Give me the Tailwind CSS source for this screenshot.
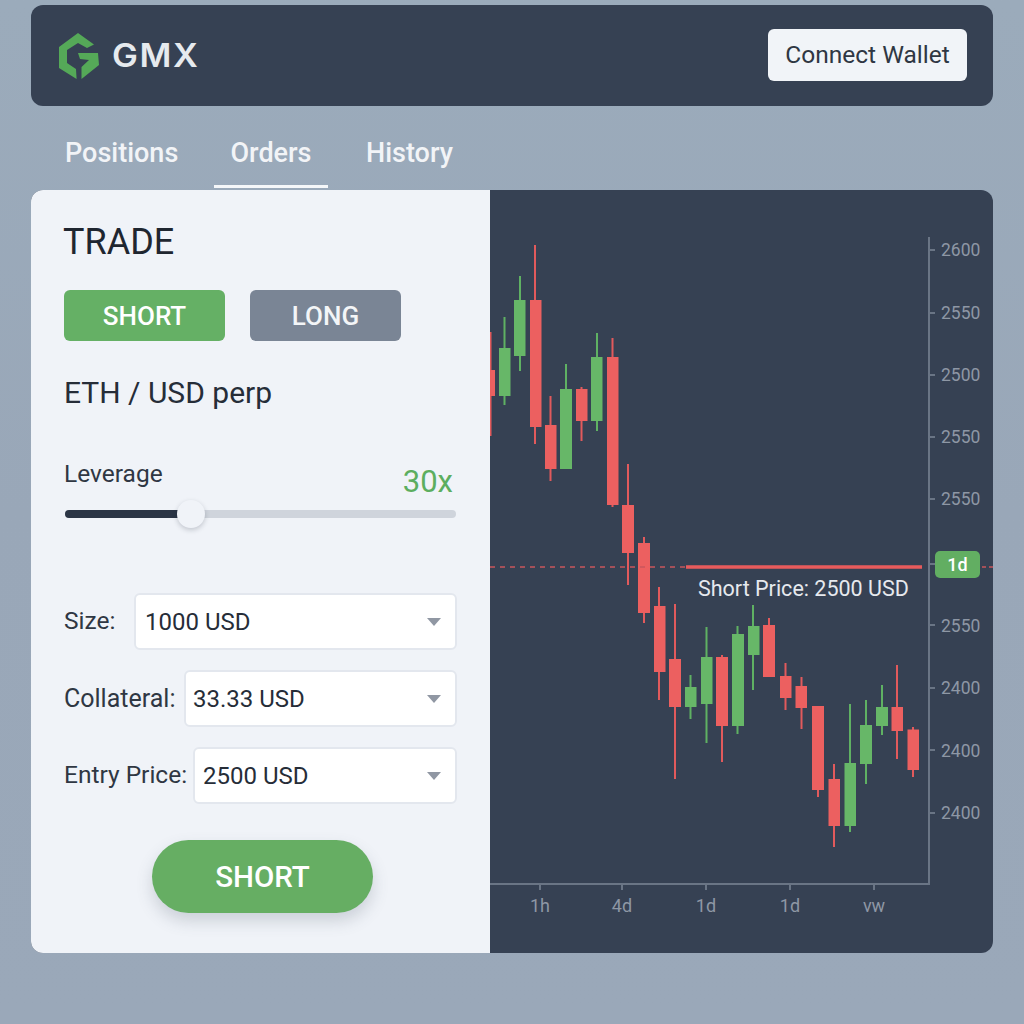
<!DOCTYPE html>
<html lang="en">
<head>
<meta charset="utf-8">
<title>GMX Trade</title>
<script src="https://cdn.jsdelivr.net/npm/@tailwindcss/browser@4"></script>
</head>
<body class="m-0 h-[1024px] w-[1024px] overflow-hidden bg-gradient-to-b from-[#9babbb] via-[#99a7b8] to-[#9aa8b9] font-[Roboto,sans-serif]">
<div class="px-[31px] pt-[5px]">
  <header class="flex h-[101px] items-center justify-between rounded-xl bg-[#364153] pl-[27px] pr-[26px]">
    <div class="flex items-center">
      <svg class="block h-[48px] w-[42px]" viewBox="57 32 42 48" aria-hidden="true">
        <polygon fill="#55a958" points="77,33 93,44.5 86,48 77,43 66,50 66,63 75,69 75.6,79 58,68 58,47"/>
        <polygon fill="#55a958" points="77,53 97,53 98,65 80.5,79 80.5,67 88,60 79,59"/>
      </svg>
      <span class="ml-[12px] origin-left scale-x-[1.08] font-[Inter,sans-serif] text-[32px] leading-none font-semibold tracking-[1.5px] text-[#e6eaee]">GMX</span>
    </div>
    <button class="-mt-px h-[52px] w-[199px] rounded-md bg-[#f1f4f8] text-[24.5px] text-[#2f3743]">Connect Wallet</button>
  </header>

  <nav class="flex gap-[17px] pl-[16px] pt-[32px] text-[27px] leading-[30px] font-medium text-[#f2f4f7]">
    <div class="w-[150px] pb-[17px] pl-[18px]">Positions</div>
    <div class="w-[114px] border-b-[3px] border-[#f5f7f9] pb-[17px] text-center">Orders</div>
    <div class="ml-[3px] px-[18px] pb-[17px]">History</div>
  </nav>

  <main class="mt-[2px] flex h-[763px] w-[962px] overflow-hidden rounded-xl bg-[#364153]">
    <section class="h-full w-[459px] flex-none bg-[#f0f3f8] pl-[33px] pt-[32px] text-[#262d38]">
      <h1 class="-ml-px text-[36px] leading-[40px] font-normal text-[#1f2630]">TRADE</h1>
      <div class="mt-[28px] flex gap-[25px]">
        <button class="h-[51px] w-[161px] rounded-md bg-[#65b065] pt-px text-[26px] font-medium text-white">SHORT</button>
        <button class="h-[51px] w-[151px] rounded-md bg-[#7a8595] pt-px text-[26px] font-medium text-[#f3f5f7]">LONG</button>
      </div>
      <p class="mt-[34px] text-[30px] leading-[36px] text-[#262d38]">ETH / USD perp</p>
      <div class="mt-[48px] flex w-[389px] items-start justify-between">
        <span class="text-[24.5px] leading-[30px] text-[#2f3743]">Leverage</span>
        <span class="mt-[5px] text-[31px] leading-[36px] text-[#5cae5f]">30x</span>
      </div>
      <div class="relative ml-px mt-[10px] h-[8px] w-[391px] rounded-full bg-[#cfd4dc]">
        <div class="h-full w-[120px] rounded-l-full bg-[#2b3545]"></div>
        <div class="absolute left-[112px] top-[-10px] h-[28px] w-[28px] rounded-full bg-[#f0f3f8] shadow-[0_2px_5px_rgba(30,41,59,0.22)]"></div>
      </div>

      <div class="mt-[75px] flex w-[393px] flex-col gap-[20px]">
        <div class="flex h-[57px] items-center">
          <span class="w-[70px] flex-none text-[24.5px] text-[#2f3743]">Size:</span>
          <div class="flex h-full flex-1 items-center justify-between rounded-md border-2 border-[#e3e7ee] bg-white pl-[9px] pr-[14px] text-[24px] text-[#262d38]">
            <span>1000 USD</span>
            <svg class="h-[8px] w-[14px]" viewBox="0 0 14 8" aria-hidden="true"><polygon points="0,0 14,0 7,8" fill="#9097a3"/></svg>
          </div>
        </div>
        <div class="flex h-[57px] items-center">
          <span class="w-[120px] flex-none text-[25px] text-[#2f3743]">Collateral:</span>
          <div class="flex h-full flex-1 items-center justify-between rounded-md border-2 border-[#e3e7ee] bg-white pl-[7px] pr-[14px] text-[24px] text-[#262d38]">
            <span>33.33 USD</span>
            <svg class="h-[8px] w-[14px]" viewBox="0 0 14 8" aria-hidden="true"><polygon points="0,0 14,0 7,8" fill="#9097a3"/></svg>
          </div>
        </div>
        <div class="flex h-[57px] items-center">
          <span class="w-[129px] flex-none text-[24.5px] text-[#2f3743]">Entry Price:</span>
          <div class="flex h-full flex-1 items-center justify-between rounded-md border-2 border-[#e3e7ee] bg-white pl-[8px] pr-[14px] text-[24px] text-[#262d38]">
            <span>2500 USD</span>
            <svg class="h-[8px] w-[14px]" viewBox="0 0 14 8" aria-hidden="true"><polygon points="0,0 14,0 7,8" fill="#9097a3"/></svg>
          </div>
        </div>
      </div>

      <button class="ml-[88px] mt-[36px] h-[73px] w-[221px] rounded-full bg-[#66ae63] pt-[2px] text-[29.5px] font-medium text-white shadow-[0_8px_16px_rgba(71,85,105,0.22)]">SHORT</button>
    </section>

    <section class="h-full flex-1">
      <svg class="block h-full w-full" viewBox="490 190 503 763" role="img" aria-label="ETH / USD candlestick chart">
        <g stroke="#6a7585" stroke-width="2" fill="none">
          <path d="M929 237V884H490"/>
          <path d="M929 250h6M929 313h6M929 375h6M929 437h6M929 499h6M929 564h6M929 625h6M929 688h6M929 750h6M929 813h6"/>
          <path d="M540 884v6M622 884v6M706 884v6M790 884v6M874 884v6"/>
        </g>
        <g stroke-width="2">
          <g stroke="#e25a5c">
            <path d="M490.5 332V436M535 245V444M550.5 396V481M581.5 387V441M612.5 338V507M628 464V585M644 537V623M659 587V700M675 604V779M722 655V762M769 618V677M785.5 663V710M801.5 677V729M818 706V797M834 764V847M897 665V759M913 727V777"/>
          </g>
          <g stroke="#5fb163">
            <path d="M504.5 317V405M520 276V371M566 364V469M597 333V431M690.5 675V719M706.5 627V743M737.5 626V734M753 605V690M850 704V832M866 700V784M882 685V735"/>
          </g>
        </g>
        <g fill="#ec6060">
          <rect x="490" y="370" width="5" height="26"/>
          <rect x="530" y="300" width="11.5" height="127"/>
          <rect x="545" y="425" width="11.5" height="44"/>
          <rect x="576" y="389" width="11.5" height="32"/>
          <rect x="607" y="357" width="11.5" height="148"/>
          <rect x="622" y="505" width="12" height="48"/>
          <rect x="638" y="543" width="12" height="70"/>
          <rect x="654" y="606" width="11.5" height="66"/>
          <rect x="669" y="659" width="12" height="48"/>
          <rect x="716" y="657" width="12" height="69"/>
          <rect x="763" y="625" width="12" height="52"/>
          <rect x="780" y="676" width="11.5" height="22"/>
          <rect x="795.5" y="686" width="11.5" height="22"/>
          <rect x="812" y="706" width="12" height="84"/>
          <rect x="828.5" y="779" width="11.5" height="47"/>
          <rect x="891.5" y="707" width="11.5" height="24"/>
          <rect x="907.5" y="729.5" width="11.5" height="40.5"/>
        </g>
        <g fill="#67b768">
          <rect x="499" y="348" width="11.5" height="48"/>
          <rect x="514" y="300" width="11.5" height="56"/>
          <rect x="560" y="389" width="12" height="80"/>
          <rect x="591" y="357" width="11.5" height="64"/>
          <rect x="685" y="687" width="11.5" height="20"/>
          <rect x="701" y="657" width="11.5" height="47"/>
          <rect x="732" y="634" width="12" height="92"/>
          <rect x="748" y="626" width="11.5" height="29"/>
          <rect x="844.5" y="763" width="11.5" height="63"/>
          <rect x="860" y="725" width="12" height="39"/>
          <rect x="876" y="707" width="12" height="19"/>
        </g>
        <path d="M490 567H686" stroke="#c9565c" stroke-width="1.5" stroke-dasharray="5 5" fill="none"/>
        <path d="M982 567H993" stroke="#c9565c" stroke-width="1.5" stroke-dasharray="4 3" fill="none"/>
        <path d="M686 567H922" stroke="#e85b5c" stroke-width="3.5" fill="none"/>
        <rect x="935" y="551" width="45" height="27" rx="5" fill="#62ae62"/>
        <text x="957.5" y="571" text-anchor="middle" class="fill-white text-[18px] font-medium">1d</text>
        <text x="698" y="596" class="fill-[#e6e9ee] text-[21.5px]">Short Price: 2500 USD</text>
        <g class="fill-[#8e97a5] text-[17.5px]">
          <text x="941" y="256">2600</text>
          <text x="941" y="319">2550</text>
          <text x="941" y="381">2500</text>
          <text x="941" y="443">2550</text>
          <text x="941" y="505">2550</text>
          <text x="941" y="632">2550</text>
          <text x="941" y="694">2400</text>
          <text x="941" y="757">2400</text>
          <text x="941" y="819">2400</text>
        </g>
        <g class="fill-[#8e97a5] text-[18px]" text-anchor="middle">
          <text x="540" y="912">1h</text>
          <text x="622" y="912">4d</text>
          <text x="706" y="912">1d</text>
          <text x="790" y="912">1d</text>
          <text x="874" y="912">vw</text>
        </g>
      </svg>
    </section>
  </main>
</div>
</body>
</html>
